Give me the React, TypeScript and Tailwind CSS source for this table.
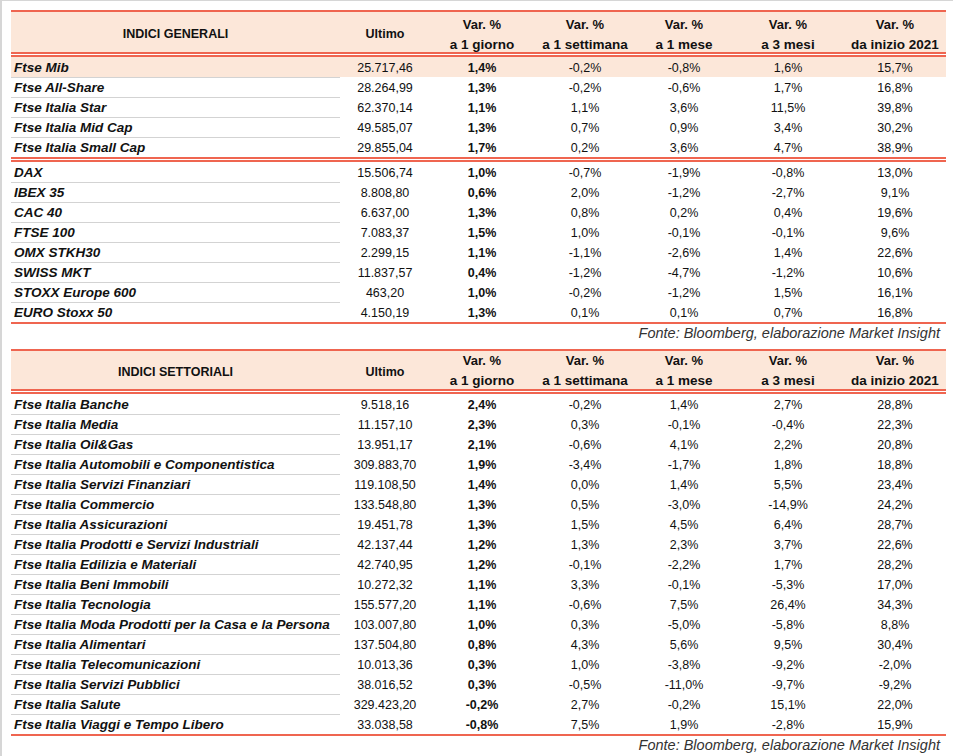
type Row = [string, string, string, string, string, string, string]

const generali: Row[][] = [
  [
    ['Ftse Mib', '25.717,46', '1,4%', '-0,2%', '-0,8%', '1,6%', '15,7%'],
    ['Ftse All-Share', '28.264,99', '1,3%', '-0,2%', '-0,6%', '1,7%', '16,8%'],
    ['Ftse Italia Star', '62.370,14', '1,1%', '1,1%', '3,6%', '11,5%', '39,8%'],
    ['Ftse Italia Mid Cap', '49.585,07', '1,3%', '0,7%', '0,9%', '3,4%', '30,2%'],
    ['Ftse Italia Small Cap', '29.855,04', '1,7%', '0,2%', '3,6%', '4,7%', '38,9%'],
  ],
  [
    ['DAX', '15.506,74', '1,0%', '-0,7%', '-1,9%', '-0,8%', '13,0%'],
    ['IBEX 35', '8.808,80', '0,6%', '2,0%', '-1,2%', '-2,7%', '9,1%'],
    ['CAC 40', '6.637,00', '1,3%', '0,8%', '0,2%', '0,4%', '19,6%'],
    ['FTSE 100', '7.083,37', '1,5%', '1,0%', '-0,1%', '-0,1%', '9,6%'],
    ['OMX STKH30', '2.299,15', '1,1%', '-1,1%', '-2,6%', '1,4%', '22,6%'],
    ['SWISS MKT', '11.837,57', '0,4%', '-1,2%', '-4,7%', '-1,2%', '10,6%'],
    ['STOXX Europe 600', '463,20', '1,0%', '-0,2%', '-1,2%', '1,5%', '16,1%'],
    ['EURO Stoxx 50', '4.150,19', '1,3%', '0,1%', '0,1%', '0,7%', '16,8%'],
  ],
]

const settoriali: Row[][] = [
  [
    ['Ftse Italia Banche', '9.518,16', '2,4%', '-0,2%', '1,4%', '2,7%', '28,8%'],
    ['Ftse Italia Media', '11.157,10', '2,3%', '0,3%', '-0,1%', '-0,4%', '22,3%'],
    ['Ftse Italia Oil&Gas', '13.951,17', '2,1%', '-0,6%', '4,1%', '2,2%', '20,8%'],
    ['Ftse Italia Automobili e Componentistica', '309.883,70', '1,9%', '-3,4%', '-1,7%', '1,8%', '18,8%'],
    ['Ftse Italia Servizi Finanziari', '119.108,50', '1,4%', '0,0%', '1,4%', '5,5%', '23,4%'],
    ['Ftse Italia Commercio', '133.548,80', '1,3%', '0,5%', '-3,0%', '-14,9%', '24,2%'],
    ['Ftse Italia Assicurazioni', '19.451,78', '1,3%', '1,5%', '4,5%', '6,4%', '28,7%'],
    ['Ftse Italia Prodotti e Servizi Industriali', '42.137,44', '1,2%', '1,3%', '2,3%', '3,7%', '22,6%'],
    ['Ftse Italia Edilizia e Materiali', '42.740,95', '1,2%', '-0,1%', '-2,2%', '1,7%', '28,2%'],
    ['Ftse Italia Beni Immobili', '10.272,32', '1,1%', '3,3%', '-0,1%', '-5,3%', '17,0%'],
    ['Ftse Italia Tecnologia', '155.577,20', '1,1%', '-0,6%', '7,5%', '26,4%', '34,3%'],
    ['Ftse Italia Moda Prodotti per la Casa e la Persona', '103.007,80', '1,0%', '0,3%', '-5,0%', '-5,8%', '8,8%'],
    ['Ftse Italia Alimentari', '137.504,80', '0,8%', '4,3%', '5,6%', '9,5%', '30,4%'],
    ['Ftse Italia Telecomunicazioni', '10.013,36', '0,3%', '1,0%', '-3,8%', '-9,2%', '-2,0%'],
    ['Ftse Italia Servizi Pubblici', '38.016,52', '0,3%', '-0,5%', '-11,0%', '-9,7%', '-9,2%'],
    ['Ftse Italia Salute', '329.423,20', '-0,2%', '2,7%', '-0,2%', '15,1%', '22,0%'],
    ['Ftse Italia Viaggi e Tempo Libero', '33.038,58', '-0,8%', '7,5%', '1,9%', '-2,8%', '15,9%'],
  ],
]

const cols = 'grid grid-cols-[329px_90px_104px_102px_96px_112px_102px]'

function DoubleRed() {
  return (
    <div className="flex flex-col">
      <div className="h-[2px] bg-[#ef6550]" />
      <div className="h-px bg-white" />
      <div className="h-[2px] bg-[#ef6550]" />
    </div>
  )
}

function Tabella({
  titolo,
  gruppi,
  headerH,
  varPad,
}: {
  titolo: string
  gruppi: Row[][]
  headerH: string
  varPad: string
}) {
  const heads = ['a 1 giorno', 'a 1 settimana', 'a 1 mese', 'a 3 mesi', 'da inizio 2021']
  return (
    <div className="w-[935px]">
      <div className="h-[2px] bg-[#ef6550]" />
      <div className={`${cols} ${headerH} bg-[#fce7d9] font-bold text-[12.5px] items-center text-center`}>
        <div className="pt-[2px]">{titolo}</div>
        <div className="pt-[2px]">Ultimo</div>
        {heads.map((h) => (
          <div key={h} className={`leading-[20px] ${varPad}`}>
            <div className="text-[13px]">Var. %</div>
            <div className="text-[13.5px]">{h}</div>
          </div>
        ))}
      </div>
      {gruppi.map((rows, gi) => (
        <div key={gi}>
          <DoubleRed />
          {rows.map((r, i) => {
            const last = i === rows.length - 1
            const hl = gi === 0 && i === 0 && titolo === 'INDICI GENERALI'
            return (
              <div key={r[0]} className={`${cols} h-[20px] text-[12.5px] text-center items-stretch ${hl ? 'bg-[#fce7d9]' : ''}`}>
                <div
                  className={`text-left pl-[3px] pt-[3px] text-[13.5px] font-bold italic leading-[16px] whitespace-nowrap ${
                    last ? '' : 'border-b border-[#d3d3d3]'
                  }`}
                >
                  {r[0]}
                </div>
                <div className="pt-[2px] leading-[19px]">{r[1]}</div>
                <div className="pt-[2px] leading-[19px] font-bold">{r[2]}</div>
                <div className="pt-[2px] leading-[19px]">{r[3]}</div>
                <div className="pt-[2px] leading-[19px]">{r[4]}</div>
                <div className="pt-[2px] leading-[19px]">{r[5]}</div>
                <div className="pt-[2px] leading-[19px]">{r[6]}</div>
              </div>
            )
          })}
        </div>
      ))}
      <div className="h-[2px] bg-[#ef6550]" />
      <div className="text-right pr-[6px] italic text-[14.5px] leading-[18px] text-[#333]">
        Fonte: Bloomberg, elaborazione Market Insight
      </div>
    </div>
  )
}

export default function App() {
  return (
    <div
      className="w-[953px] h-[756px] bg-white border-t border-l-2 border-[#d6d6d6] pl-[9px] pt-[9px] text-[#111] overflow-hidden"
      style={{ fontFamily: '"Liberation Sans", Arial, sans-serif' }}
    >
      <Tabella titolo="INDICI GENERALI" gruppi={generali} headerH="h-[40px]" varPad="pt-[3px]" />
      <div className="h-[7px]" />
      <Tabella titolo="INDICI SETTORIALI" gruppi={settoriali} headerH="h-[38px]" varPad="pt-0" />
    </div>
  )
}
